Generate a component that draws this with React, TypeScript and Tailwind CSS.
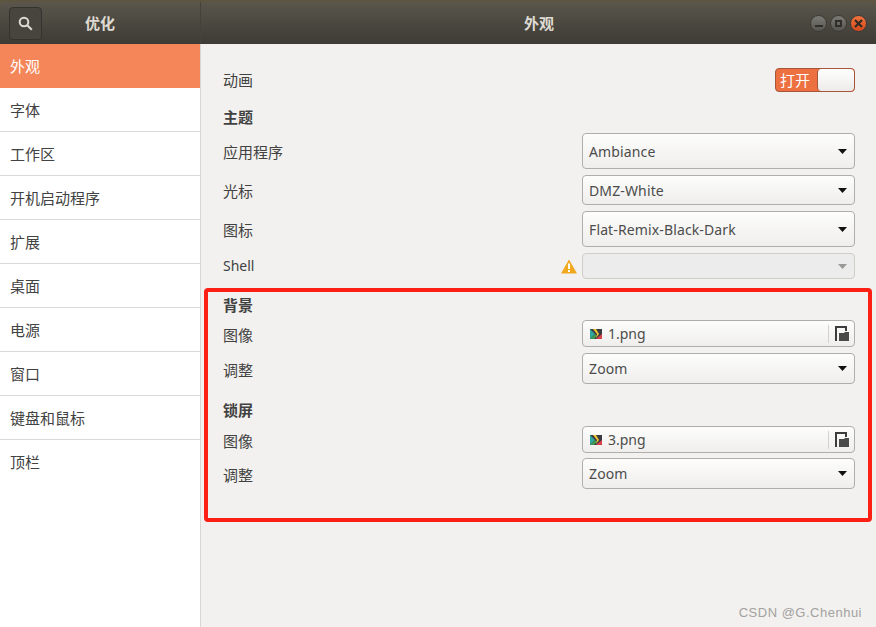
import React from "react";

const FONT = { fontFamily: '"Noto Sans CJK SC", "Noto Sans", sans-serif' };

function Combo({ text, h, disabled }: { text?: string; h: string; disabled?: boolean }) {
  return (
    <div
      className={`w-[273px] ${h} flex items-center justify-between pl-[6px] pr-[7px] rounded-[4px] border text-[14px] ${
        disabled
          ? "border-[#cfcdca] bg-[#ececec]"
          : "border-[#b0aeaa] bg-gradient-to-b from-[#fdfdfc] to-[#efeeec] text-[#4c4c4c]"
      }`}
      style={{ fontFamily: '"Noto Sans", sans-serif', letterSpacing: "0.13px" }}
    >
      <span>{text}</span>
      <svg width="9" height="5" viewBox="0 0 9 5">
        <path d="M0 0h9L4.500 5z" fill={disabled ? "#9a9a98" : "#111"} />
      </svg>
    </div>
  );
}

function FileBtn({ text, h }: { text: string; h: string }) {
  return (
    <div
      className={`w-[273px] ${h} flex items-center pl-[7px] rounded-[4px] border border-[#b0aeaa] bg-gradient-to-b from-[#fdfdfc] to-[#efeeec] text-[14px] text-[#4c4c4c]`}
      style={{ fontFamily: '"Noto Sans", sans-serif' }}
    >
      <svg width="12" height="10" viewBox="0 0 12 10" className="mr-[6px] shrink-0">
        <rect width="12" height="10" fill="#3a3a42" />
        <path d="M0 0l5 5-5 5z" fill="#2fa7a0" />
        <path d="M0 10l5-5 2 2-3 3z" fill="#3f9a55" />
        <path d="M3 0h3l3 5-3 4 1-4z" fill="#f4c430" />
        <path d="M8 8l4-3v5H6z" fill="#d8404a" />
      </svg>
      <span className="flex-1">{text}</span>
      <div className="w-[26px] h-[18px] border-l border-[#d4d2cf] flex items-center justify-center">
        <svg width="14" height="15" viewBox="0 0 14 15">
          <path d="M0 0h12v5H10V2H2v13H0z" fill="#3c3c3c" />
          <path d="M4 15V7h5l1-1h4v9z" fill="#4a4a4a" />
        </svg>
      </div>
    </div>
  );
}

function Label({ children, bold }: { children: React.ReactNode; bold?: boolean }) {
  return <span className={`text-[15px] text-[#424242] ${bold ? "font-bold" : ""}`}>{children}</span>;
}

function RowLabel({ children }: { children: React.ReactNode }) {
  return <span className="mt-[3px] text-[15px] text-[#424242]">{children}</span>;
}

const items = ["外观", "字体", "工作区", "开机启动程序", "扩展", "桌面", "电源", "窗口", "键盘和鼠标", "顶栏"];

export default function App() {
  return (
    <div className="relative w-[876px] h-[627px] overflow-hidden bg-[#f2f1ef]" style={FONT}>
      <div className="bg-[#5d5540]">
        <div className="h-[2px]" />
        <div className="h-[42px] flex bg-gradient-to-b from-[#5a564c] to-[#3d3b35] rounded-t-[5px]">
          <div className="w-[201px] flex items-center border-r border-[#44423b]">
            <div className="ml-[9px] w-[33px] h-[33px] rounded-[4px] border border-[#34332d] bg-[#47453e] flex items-center justify-center">
              <svg width="15" height="15" viewBox="0 0 15 15" fill="none" stroke="#dfdbd2" strokeWidth="2">
                <circle cx="6" cy="6" r="4.300" />
                <path d="M9.300 9.300l4.500 4.500" />
              </svg>
            </div>
            <span className="ml-[43px] text-[15px] font-bold text-[#dfdbd2]">优化</span>
          </div>
          <div className="flex-1 relative flex items-center justify-center">
            <span className="text-[15px] font-bold text-[#dfdbd2] ml-[1px]">外观</span>
            <div className="absolute right-[9px] top-[13px] flex gap-[3px]">
              <div className="w-[17px] h-[17px] rounded-full bg-gradient-to-b from-[#7b7a74] to-[#55544f] border border-[#3b3a35] flex items-end justify-center pb-[4px]">
                <div className="w-[8px] h-[2px] bg-[#2f2e2a]" />
              </div>
              <div className="w-[17px] h-[17px] rounded-full bg-gradient-to-b from-[#7b7a74] to-[#55544f] border border-[#3b3a35] flex items-center justify-center">
                <div className="w-[7px] h-[7px] border-2 border-[#2f2e2a]" />
              </div>
              <div className="w-[17px] h-[17px] rounded-full bg-gradient-to-b from-[#f0733d] to-[#d4491c] border border-[#3b3a35] flex items-center justify-center">
                <svg width="9" height="9" viewBox="0 0 9 9" stroke="#2f2a22" strokeWidth="2.200">
                  <path d="M1 1l7 7M8 1l-7 7" />
                </svg>
              </div>
            </div>
          </div>
        </div>
      </div>

      <div className="flex h-[583px]">
        {/* sidebar */}
        <div className="w-[201px] bg-white border-r border-[#d9d7d4] shrink-0">
          {items.map((t, i) => (
            <div
              key={t}
              className={`h-[44px] flex items-center pl-[10px] pt-[1px] text-[15px] ${
                i === 0
                  ? "bg-[#f5865a] text-white border-b border-[#f5865a]"
                  : i === items.length - 1
                    ? "text-[#424242]"
                    : "text-[#424242] border-b border-[#dbd9d6]"
              }`}
            >
              {t}
            </div>
          ))}
        </div>

        {/* main */}
        <div className="flex-1 pl-[22px] pr-[21px] pt-[24px] flex flex-col">
          <div className="h-[24px] flex items-center justify-between">
            <span className="mt-[1px] text-[15px] text-[#424242]">动画</span>
            <div className="w-[80px] h-[24px] rounded-[4px] border border-[#a5553a] bg-[#ec7040] flex">
              <span className="w-[41px] pl-[4px] text-[15px] leading-[22px] text-white">打开</span>
              <div className="flex-1 rounded-[4px] bg-gradient-to-b from-white to-[#ecebe9] border-l border-[#a5553a]" />
            </div>
          </div>
          <div className="mt-[15px] h-[20px] flex items-center">
            <Label bold>主题</Label>
          </div>
          <div className="mt-[6px] flex flex-col gap-[6px]">
            <div className="flex items-center justify-between">
              <RowLabel>应用程序</RowLabel>
              <Combo text="Ambiance" h="h-[36px]" />
            </div>
            <div className="flex items-center justify-between">
              <RowLabel>光标</RowLabel>
              <Combo text="DMZ-White" h="h-[30px]" />
            </div>
            <div className="flex items-center justify-between">
              <RowLabel>图标</RowLabel>
              <Combo text="Flat-Remix-Black-Dark" h="h-[36px]" />
            </div>
            <div className="flex items-center">
              <span className="-mt-[2px] text-[14px] text-[#424242]" style={{ fontFamily: '"Noto Sans", sans-serif' }}>
                Shell
              </span>
              <svg width="16" height="15" viewBox="0 0 16 15" className="ml-auto mr-[5px]">
                <path d="M8 0.500L16 14.500H0z" fill="#f0a81f" />
                <rect x="7" y="4.500" width="2" height="5.500" fill="#fff" />
                <rect x="7" y="11" width="2" height="2" fill="#fff" />
              </svg>
              <Combo h="h-[26px]" disabled />
            </div>
          </div>

          <div className="mt-[16px] h-[20px] flex items-center">
            <Label bold>背景</Label>
          </div>
          <div className="mt-[5px] flex flex-col gap-[6px]">
            <div className="flex items-center justify-between">
              <RowLabel>图像</RowLabel>
              <FileBtn text="1.png" h="h-[27px]" />
            </div>
            <div className="flex items-center justify-between">
              <RowLabel>调整</RowLabel>
              <Combo text="Zoom" h="h-[31px]" />
            </div>
          </div>
          <div className="mt-[16px] h-[20px] flex items-center">
            <Label bold>锁屏</Label>
          </div>
          <div className="mt-[6px] flex flex-col gap-[5px]">
            <div className="flex items-center justify-between">
              <RowLabel>图像</RowLabel>
              <FileBtn text="3.png" h="h-[27px]" />
            </div>
            <div className="flex items-center justify-between">
              <RowLabel>调整</RowLabel>
              <Combo text="Zoom" h="h-[31px]" />
            </div>
          </div>
        </div>
      </div>

      {/* annotation overlay */}
      <div className="absolute left-[204px] top-[288px] w-[668px] h-[234px] rounded-[4px] border-4 border-[#fb1f14]" />
      <div
        className="absolute right-[14px] bottom-[5px] text-[13px] text-[#a3a2a0]"
        style={{ fontFamily: '"Liberation Sans", sans-serif', letterSpacing: "0.5px" }}
      >
        CSDN @G.Chenhui
      </div>
    </div>
  );
}
